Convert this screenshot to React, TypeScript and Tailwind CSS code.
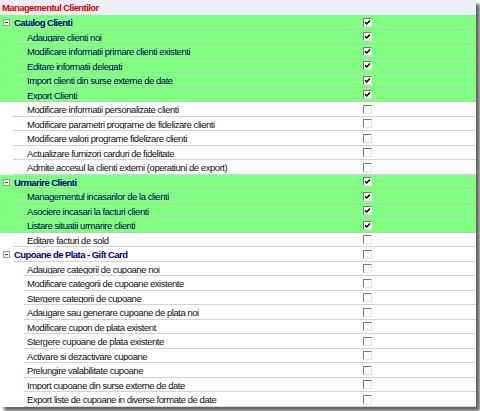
import React from 'react';

type Item = { label: string; checked: boolean };
type Group = { title: string; checked: boolean; lineInset: string; items: Item[] };

const groups: Group[] = [
  {
    title: 'Catalog Clienti',
    checked: true,
    lineInset: 'left-[13px]',
    items: [
      { label: 'Adaugare clienti noi', checked: true },
      { label: 'Modificare informatii primare clienti existenti', checked: true },
      { label: 'Editare informatii delegati', checked: true },
      { label: 'Import clienti din surse externe de date', checked: true },
      { label: 'Export Clienti', checked: true },
      { label: 'Modificare informatii personalizate clienti', checked: false },
      { label: 'Modificare parametri programe de fidelizare clienti', checked: false },
      { label: 'Modificare valori programe fidelizare clienti', checked: false },
      { label: 'Actualizare furnizori carduri de fidelitate', checked: false },
      { label: 'Admite accesul la clienti externi (operatiuni de export)', checked: false },
    ],
  },
  {
    title: 'Urmarire Clienti',
    checked: true,
    lineInset: 'left-[13px]',
    items: [
      { label: 'Managementul incasarilor de la clienti', checked: true },
      { label: 'Asociere incasari la facturi clienti', checked: true },
      { label: 'Listare situatii urmarire clienti', checked: true },
      { label: 'Editare facturi de sold', checked: false },
    ],
  },
  {
    title: 'Cupoane de Plata - Gift Card',
    checked: false,
    lineInset: 'left-[24px]',
    items: [
      { label: 'Adaugare categorii de cupoane noi', checked: false },
      { label: 'Modificare categorii de cupoane existente', checked: false },
      { label: 'Stergere categorii de cupoane', checked: false },
      { label: 'Adaugare sau generare cupoane de plata noi', checked: false },
      { label: 'Modificare cupon de plata existent', checked: false },
      { label: 'Stergere cupoane de plata existente', checked: false },
      { label: 'Activare si dezactivare cupoane', checked: false },
      { label: 'Prelungire valabilitate cupoane', checked: false },
      { label: 'Import cupoane din surse externe de date', checked: false },
      { label: 'Export liste de cupoane in diverse formate de date', checked: false },
    ],
  },
];

function CheckBox({ checked }: { checked: boolean }) {
  return (
    <div className="relative h-[9px] w-[9px] border-t border-l border-r border-b border-t-[#7a7a7a] border-l-[#7a7a7a] border-r-[#e4e4e4] border-b-[#e4e4e4] bg-white">
      {checked && (
        <svg viewBox="0 0 7 7" className="absolute left-0 top-0 h-[7px] w-[7px]">
          <path d="M1 3.2 L2.7 5 L6 1.4" stroke="#000" strokeWidth="1.5" fill="none" />
        </svg>
      )}
    </div>
  );
}

function Row({
  label,
  checked,
  green,
  header,
  inset,
}: {
  label: string;
  checked: boolean;
  green: boolean;
  header?: boolean;
  inset: string;
}) {
  return (
    <div className={`relative flex h-[14.5px] items-center ${green ? 'bg-[#80ff80]' : 'bg-white'}`}>
      {header && (
        <div className="absolute left-[3px] top-[4px] flex h-[7px] w-[7px] items-center justify-center border border-[#9a9a9a] bg-[#f4f4f4]">
          <div className="h-px w-[3px] bg-[#444]" />
        </div>
      )}
      <div
        className={`w-[363px] shrink-0 truncate pt-px leading-none ${
          header
            ? 'pl-[14px] font-bold tracking-[-0.55px] text-[#000080]'
            : `pl-[27px] ${green ? 'text-[#00005a]' : 'text-[#111]'}`
        }`}
      >
        {label}
      </div>
      <CheckBox checked={checked} />
      <div
        className={`absolute bottom-0 right-0 h-px ${header ? 'left-[13px]' : inset} ${
          green ? 'bg-[#a8d8a8]' : 'bg-[#d2d2d2]'
        }`}
      />
    </div>
  );
}

export default function App() {
  return (
    <div className="h-[411px] w-[480px] overflow-hidden bg-white font-['Liberation_Sans',Arial,sans-serif] text-[9.5px] tracking-[-0.45px]">
      <div className="h-[407px] w-[476px] overflow-hidden bg-white shadow-[4px_4px_3px_rgba(0,0,0,0.6)]">
        <div className="flex h-[15px] items-center bg-[#eceff9] pl-[2px] pt-px font-bold tracking-[-0.6px] text-[#e00000]">
          Managementul Clientilor
        </div>
        {groups.map((g) => (
          <div key={g.title}>
            <Row label={g.title} checked={g.checked} green={g.checked} header inset={g.lineInset} />
            {g.items.map((it) => (
              <Row key={it.label} label={it.label} checked={it.checked} green={it.checked} inset={g.lineInset} />
            ))}
          </div>
        ))}
      </div>
    </div>
  );
}
